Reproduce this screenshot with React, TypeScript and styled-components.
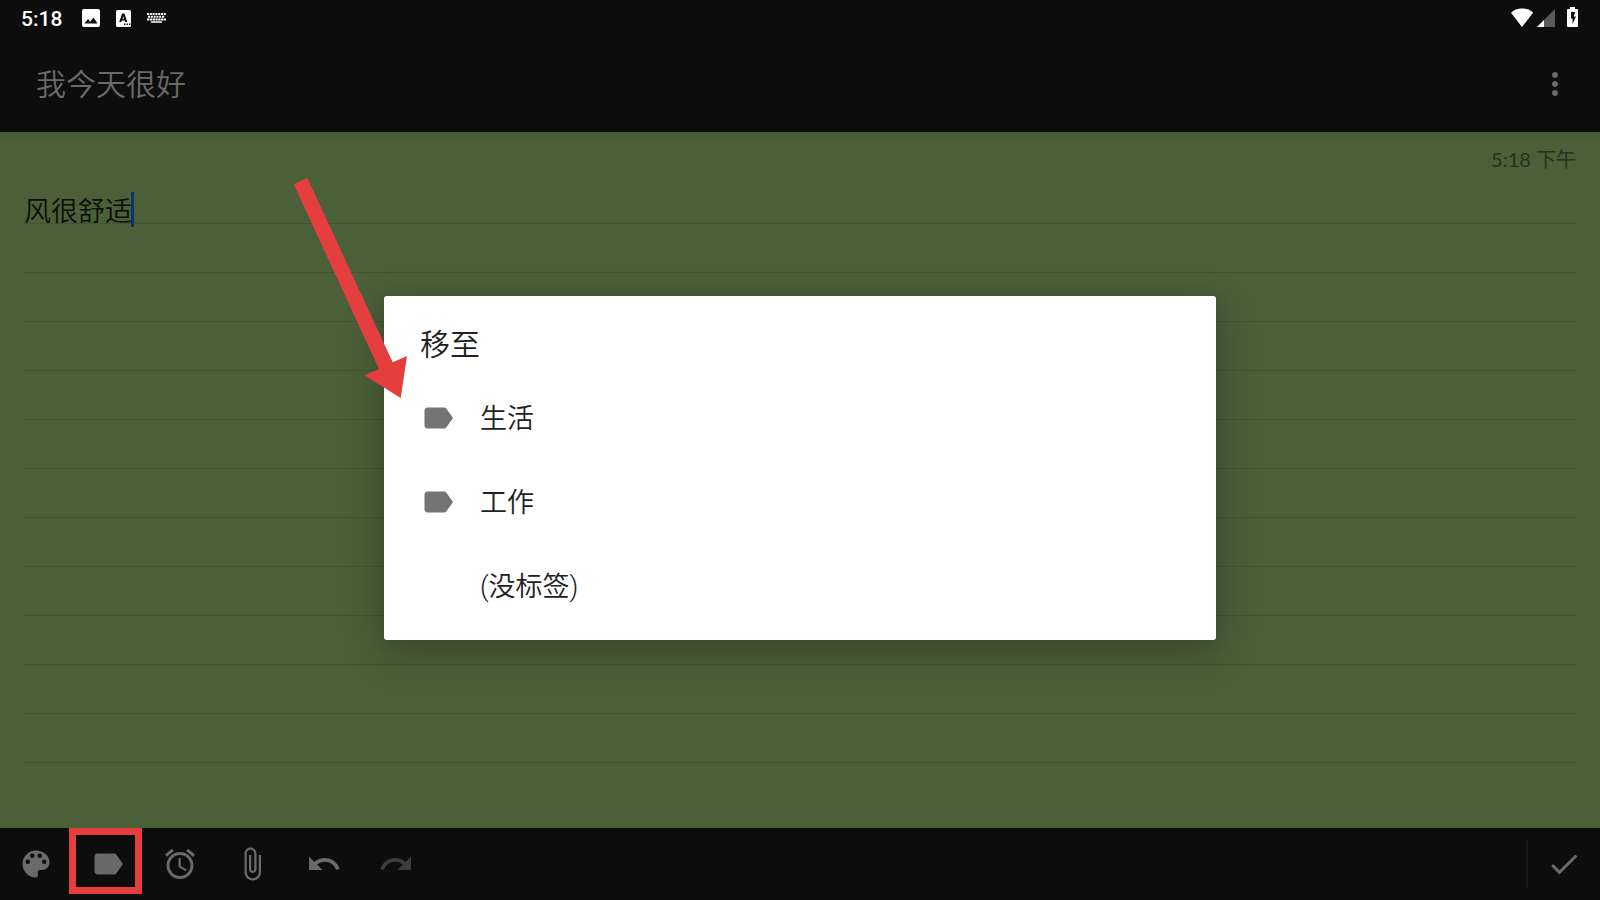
import React from "react";
import styled, { createGlobalStyle } from "styled-components";

const GlobalStyle = createGlobalStyle`
  * { box-sizing: border-box; }
  body {
    margin: 0;
    background: #0d0d0d;
    font-family: Roboto, "Noto Sans CJK SC", sans-serif;
    font-weight: 350;
  }
  button, input, textarea { font: inherit; color: inherit; border: 0; margin: 0; padding: 0; background: none; outline: 0; }
  svg { display: block; fill: currentColor; }
`;

const Screen = styled.div`
  position: relative;
  display: flex;
  flex-direction: column;
  min-height: 100vh;
`;

const StatusBar = styled.div`
  display: flex;
  justify-content: space-between;
  align-items: center;
  height: 36px;
  padding: 0 22px 0 21px;
  color: #fff;
`;

const StatusGroup = styled.div<{ $gap: number }>`
  display: flex;
  align-items: center;
  gap: ${(p) => p.$gap}px;
`;

const Clock = styled.time`
  padding-top: 1px;
  font-size: 21px;
  font-weight: 500;
  line-height: 36px;
`;

const Header = styled.header`
  display: flex;
  align-items: center;
  height: 96px;
  padding: 0 21px 0 36px;
  color: #6a6a6a;
`;

const TitleInput = styled.input`
  flex: 1;
  min-width: 0;
  height: 48px;
  padding-bottom: 4px;
  font-size: 30px;
`;

const MenuButton = styled.button`
  display: grid;
  place-items: center;
  width: 48px;
  height: 48px;
`;

const Note = styled.main`
  flex: 1;
  padding: 0 24px;
  background: linear-gradient(#42532f80, #4b5f3900 8px), #4b5f39;
`;

const NoteDate = styled.time`
  display: block;
  height: 56px;
  line-height: 54px;
  text-align: right;
  font-family: Lato, "Noto Sans CJK SC", sans-serif;
  font-size: 20px;
  font-weight: 400;
  color: #263220;
`;

const Ruled = styled.div`
  position: relative;
  font-size: 27px;
  line-height: 49px;
`;

const NoteText = styled.textarea`
  display: block;
  width: 100%;
  height: 588px;
  resize: none;
  overflow: hidden;
  color: #0b0f08;
  background: repeating-linear-gradient(
    transparent 0 35px,
    #42542f 35px 36px,
    transparent 36px 49px
  );
`;

const Caret = styled.span`
  position: absolute;
  top: 4px;
  left: 107px;
  width: 3px;
  height: 35px;
  background: #0d3468;
`;

const Toolbar = styled.footer`
  display: flex;
  align-items: center;
  height: 72px;
  background: #0d0d0d;
  color: #6a6a6a;
`;

const Tool = styled.button`
  position: relative;
  display: grid;
  place-items: center;
  width: 72px;
  height: 72px;
  padding: 0 1px 1px 0;

  &:disabled { color: #3c3c3c; }
`;

const Highlight = styled.span`
  position: absolute;
  top: 0;
  left: -3px;
  width: 73px;
  height: 66px;
  border: 7px solid #e53e3e;
`;

const Divider = styled.span`
  width: 2px;
  height: 48px;
  margin-left: auto;
  background: #1b1b1b;
`;

const Overlay = styled.div`
  position: absolute;
  inset: 36px 0 0;
  display: grid;
  place-items: center;
`;

const Dialog = styled.section`
  position: relative;
  width: 52%;
  padding-bottom: 12px;
  background: #fff;
  border-radius: 3px;
  color: #212121;
  box-shadow: 0 12px 40px rgba(0, 0, 0, 0.24), 0 2px 16px rgba(0, 0, 0, 0.08);
`;

const DialogTitle = styled.h2`
  margin: 0;
  padding: 16px 36px 0;
  height: 80px;
  font-size: 30px;
  font-weight: inherit;
  line-height: 66px;
`;

const Option = styled.button`
  display: flex;
  align-items: center;
  gap: 24px;
  width: 100%;
  height: 84px;
  padding: 0 36px;
  font-size: 27px;
  text-align: left;
`;

const OptionIcon = styled.span`
  width: 36px;
  height: 36px;
  color: #757575;
`;

const OptionText = styled.span`
  padding-bottom: 4px;
`;

const Arrow = styled.svg`
  position: absolute;
  top: -119px;
  left: -91px;
  color: #e53e3e;
  pointer-events: none;
`;

const paths = {
  palette:
    "M12 3c-5 0-9 4-9 9s4 9 9 9c.7 0 1.2-.4 1.2-1v-2.6c0-.8.6-1.4 1.4-1.4H16c2.8 0 5-2.2 5-5 0-4.4-4-8-9-8zM6.5 12a1.5 1.5 0 1 1 0-3 1.5 1.5 0 0 1 0 3zm3-4a1.5 1.5 0 1 1 0-3 1.5 1.5 0 0 1 0 3zm5 0a1.5 1.5 0 1 1 0-3 1.5 1.5 0 0 1 0 3zm3 4a1.5 1.5 0 1 1 0-3 1.5 1.5 0 0 1 0 3z",
  label:
    "M17.63 5.84C17.27 5.33 16.67 5 16 5L5 5.01C3.9 5.01 3 5.9 3 7v10c0 1.1.9 1.99 2 1.99L16 19c.67 0 1.27-.33 1.63-.84L22 12l-4.37-6.16z",
  alarm:
    "M22 5.72l-4.6-3.86-1.29 1.53 4.6 3.86L22 5.72zM7.88 3.39L6.6 1.86 2 5.71l1.29 1.53 4.59-3.85zM12.5 8H11v6l4.75 2.85.75-1.23-4-2.37V8zM12 4c-4.97 0-9 4.03-9 9s4.02 9 9 9c4.97 0 9-4.03 9-9s-4.03-9-9-9zm0 16c-3.87 0-7-3.13-7-7s3.13-7 7-7 7 3.13 7 7-3.13 7-7 7z",
  attach:
    "M16.5 6v11.5c0 2.21-1.79 4-4 4s-4-1.79-4-4V5c0-1.38 1.12-2.5 2.5-2.5s2.5 1.12 2.5 2.5v10.5c0 .55-.45 1-1 1s-1-.45-1-1V6H10v9.5c0 1.38 1.12 2.5 2.5 2.5s2.5-1.12 2.5-2.5V5c0-2.21-1.79-4-4-4S7 2.79 7 5v12.5c0 3.04 2.46 5.5 5.5 5.5s5.5-2.46 5.5-5.5V6h-1.5z",
  undo: "M12.5 8c-2.65 0-5.05.99-6.9 2.6L2 7v9h9l-3.62-3.62c1.39-1.16 3.16-1.88 5.12-1.88 3.54 0 6.55 2.31 7.6 5.5l2.37-.78C21.08 11.03 17.15 8 12.5 8z",
  redo: "M18.4 10.6C16.55 8.99 14.15 8 11.5 8c-4.65 0-8.58 3.03-9.96 7.22L3.9 16c1.05-3.19 4.05-5.5 7.6-5.5 1.95 0 3.73.72 5.12 1.88L13 16h9V7l-3.6 3.6z",
  check: "M9 16.17L4.83 12l-1.42 1.41L9 19 21 7l-1.41-1.41z",
  more: "M12 8c1.1 0 2-.9 2-2s-.9-2-2-2-2 .9-2 2 .9 2 2 2zm0 2c-1.1 0-2 .9-2 2s.9 2 2 2 2-.9 2-2-.9-2-2-2zm0 6c-1.1 0-2 .9-2 2s.9 2 2 2 2-.9 2-2-.9-2-2-2z",
};

const Icon = ({ name }: { name: keyof typeof paths }) => (
  <svg width="36" height="36" viewBox="0 0 24 24" aria-hidden="true">
    <path d={paths[name]} />
  </svg>
);

const PictureIcon = () => (
  <svg width="18" height="18" viewBox="0 0 18 18">
    <path fillRule="evenodd" d="M2 0h14a2 2 0 0 1 2 2v14a2 2 0 0 1-2 2H2a2 2 0 0 1-2-2V2a2 2 0 0 1 2-2zM2.500 14.500h13L11.500 8.500l-3.300 4.300L6 10z" />
  </svg>
);

const LetterIcon = () => (
  <svg width="15" height="17" viewBox="0 0 15 17">
    <rect width="15" height="17" rx="1.500" />
    <path fillRule="evenodd" d="M6.100 3.500h2.300L11.300 12H9.100l-.5-1.500H5.900L5.400 12H3.200zM6.500 8.800h1.600L7.300 6.200z" fill="#0d0d0d" />
    <path d="M8 13.500h1.400v1.400H8zm2.500 0h1.400v1.400h-1.400zm2.500 0h1.400v1.400H13z" fill="#0d0d0d" />
  </svg>
);

const KeyboardIcon = () => (
  <svg width="19" height="10" viewBox="0 0 19 10" fill="none" stroke="currentColor">
    <path d="M0 1h19" strokeWidth="2" strokeDasharray="2 .8" />
    <path d="M1 3.800h17" strokeWidth="2" strokeDasharray="2 .8" />
    <path d="M0 6.500h19" strokeWidth="1.800" strokeDasharray="2.300 .5" />
    <path d="M4 9h11" strokeWidth="1.500" />
  </svg>
);

const WifiIcon = () => (
  <svg width="22" height="20" viewBox="0 0 22 20">
    <path d="M11 19L0 4.700C2.500 2.100 6.500 .5 11 .5s8.500 1.600 11 4.200z" />
  </svg>
);

const SignalIcon = () => (
  <svg width="18" height="18" viewBox="0 0 18 18">
    <path d="M18 0v18H0z" fill="#5a5a5a" />
    <path d="M7 11v7H0z" />
  </svg>
);

const BatteryIcon = () => (
  <svg width="11" height="20" viewBox="0 0 11 20">
    <path fillRule="evenodd" d="M3 0h5v2h2a1 1 0 0 1 1 1v16a1 1 0 0 1-1 1H1a1 1 0 0 1-1-1V3a1 1 0 0 1 1-1h2zM4 5v6.500h1.500V17L9 9.500H6.700L8.300 5z" />
  </svg>
);

const BatteryWrap = styled.span`
  margin-left: 8px;
  padding-bottom: 2px;
`;

const StatusIcons = styled(StatusGroup)`
  margin-left: 4px;
`;

const options = [
  { name: "生活", icon: true },
  { name: "工作", icon: true },
  { name: "(没标签)", icon: false },
];

export default function App() {
  return (
    <Screen>
      <GlobalStyle />
      <StatusBar>
        <StatusGroup $gap={16}>
          <Clock>5:18</Clock>
          <StatusIcons $gap={16}>
            <PictureIcon />
            <LetterIcon />
            <KeyboardIcon />
          </StatusIcons>
        </StatusGroup>
        <StatusGroup $gap={4}>
          <WifiIcon />
          <SignalIcon />
          <BatteryWrap>
            <BatteryIcon />
          </BatteryWrap>
        </StatusGroup>
      </StatusBar>
      <Header>
        <TitleInput aria-label="标题" defaultValue="我今天很好" />
        <MenuButton aria-label="更多选项">
          <Icon name="more" />
        </MenuButton>
      </Header>
      <Note>
        <NoteDate>5:18 下午</NoteDate>
        <Ruled>
          <NoteText aria-label="笔记" defaultValue="风很舒适" />
          <Caret />
        </Ruled>
      </Note>
      <Toolbar>
        <Tool aria-label="颜色">
          <Icon name="palette" />
        </Tool>
        <Tool aria-label="标签">
          <Icon name="label" />
          <Highlight />
        </Tool>
        <Tool aria-label="提醒">
          <Icon name="alarm" />
        </Tool>
        <Tool aria-label="附件">
          <Icon name="attach" />
        </Tool>
        <Tool aria-label="撤销">
          <Icon name="undo" />
        </Tool>
        <Tool aria-label="重做" disabled>
          <Icon name="redo" />
        </Tool>
        <Divider />
        <Tool aria-label="完成">
          <Icon name="check" />
        </Tool>
      </Toolbar>
      <Overlay>
        <Dialog role="dialog" aria-labelledby="move-title">
          <DialogTitle id="move-title">移至</DialogTitle>
          {options.map((o) => (
            <Option key={o.name}>
              <OptionIcon>{o.icon && <Icon name="label" />}</OptionIcon>
              <OptionText>{o.name}</OptionText>
            </Option>
          ))}
          <Arrow width="115" height="222" viewBox="0 0 115 222" aria-hidden="true">
            <path d="M.7 7.300L14.300 .7l85.400 184.600L114 179l-6.300 42L71.300 198.300 86 192z" />
          </Arrow>
        </Dialog>
      </Overlay>
    </Screen>
  );
}
